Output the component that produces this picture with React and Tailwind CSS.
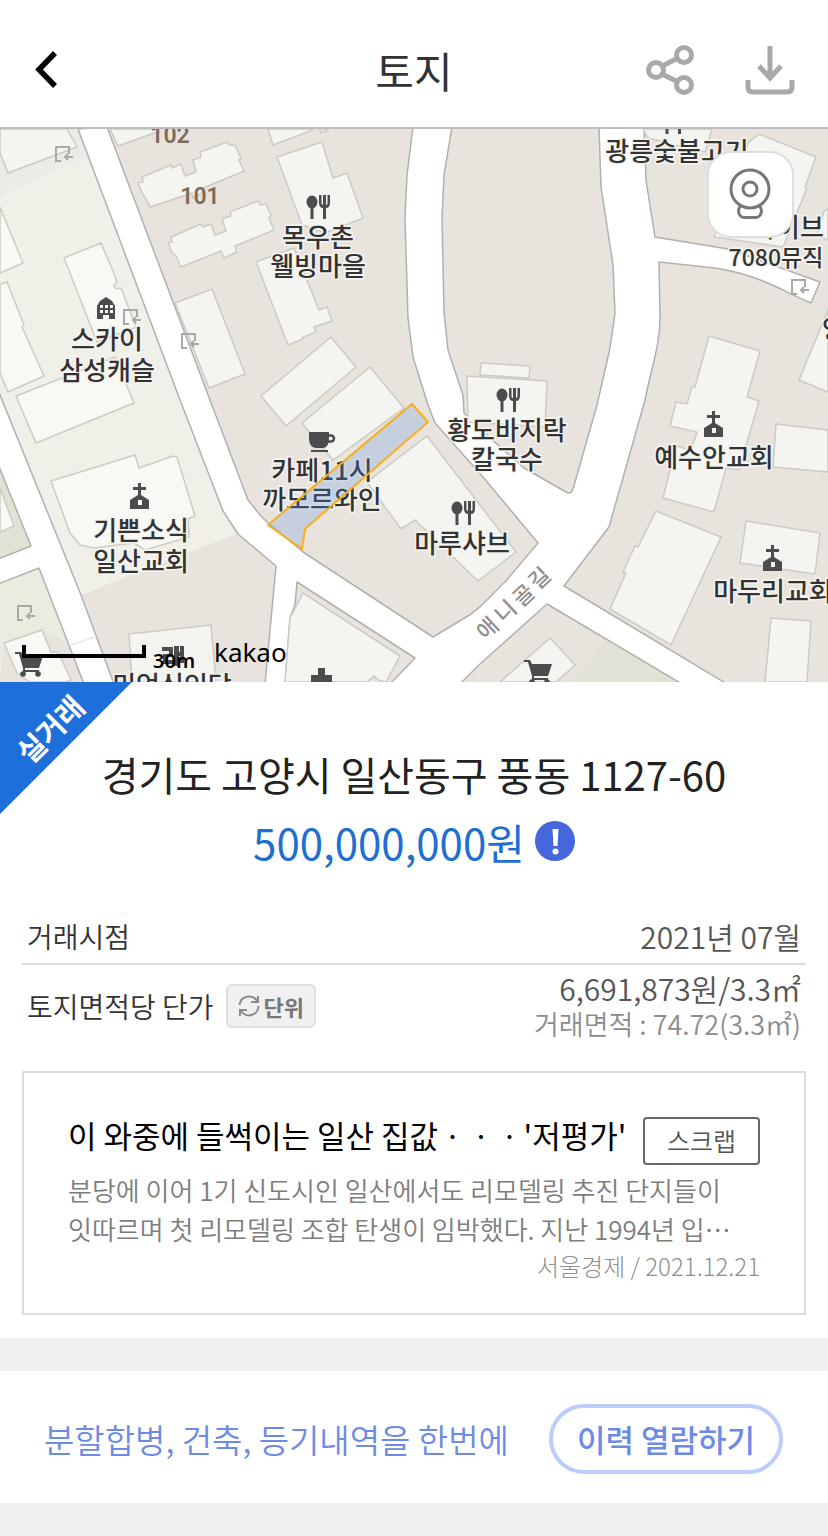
import { useState } from 'react'

const buildings = [
  '67,129 77,147 8,173 0,153 0,129',
  '110,129 118,146 160,131 160,129',
  '268,129 273,145 313,130 313,129',
  '320,129 321,133 329,130',
  '138,183 143,182 142,177 171,165 172,168 181,164 185,176 196,172 193,160 201,157 200,152 227,142 229,145 235,145 241,158 239,160 244,171 203,188 202,193 193,198 192,193 150,207 145,197 143,195',
  '168,243 172,242 171,237 201,224 203,227 211,224 215,235 226,231 222,219 231,216 230,212 258,201 260,205 266,204 271,215 269,218 274,230 235,246 237,252 224,258 221,251 181,267 176,256 172,253',
  '175,303 212,289 245,374 209,388',
  '277,157 322,142 333,178 347,173 363,218 325,233 302,225',
  '256,262 294,248 319,310 327,307 332,321 314,327 316,332 303,337 303,339 288,345',
  '331,337 356,367 286,426 261,396',
  '370,367 404,408 333,460 302,423',
  '481,363 530,366 529,378 480,375',
  '467,376 547,381 545,427 468,422',
  '427,436 516,552 478,581 415,520 401,529 367,482',
  '643,129 648,138 705,152 712,129',
  '759,134 816,157 805,187 807,188 783,247 714,237 748,143',
  '828,209 824,211 817,235 828,240',
  '828,310 799,380 828,392',
  '709,336 760,351 747,397 759,401 739,470 726,468 714,512 663,498 676,446 691,450 697,432 670,426 676,402 687,404 692,387 695,387',
  '776,424 828,430 828,472 773,467',
  '656,511 721,537 671,645 610,609 626,573 623,572 635,546 638,547',
  '746,521 820,533 815,574 740,563',
  '771,618 811,621 807,682 765,682',
  '550,638 575,665 556,682 500,682',
  '129,634 211,625 216,682 132,682',
  '303,593 400,656 386,682 378,680 374,676 367,682 285,682 290,618',
]

const lightBuildings = [
  '64,258 101,243 113,271 117,282 114,285 116,289 121,288 136,327 97,342',
  '0,207 23,263 0,273',
  '0,284 7,282 24,325 22,327 44,376 8,392 0,373',
  '16,396 115,357 134,403 36,443',
  '51,481 135,455 139,468 173,456 177,457 195,516 188,519 189,537 145,550 134,543 93,548 80,545 70,533',
  '0,488 14,526 0,532',
  '4,643 42,630 51,652 58,652 71,680 66,682 30,682 17,673',
]

const entrances = [[56, 147], [124, 310], [182, 334], [792, 280], [18, 606]]

const places = [
  { icon: 'house', ix: 97, iy: 297, x: 107, lines: [['스카이', 349], ['삼성캐슬', 380]] },
  { icon: 'food', ix: 306, iy: 195, x: 318, lines: [['목우촌', 247], ['웰빙마을', 276]] },
  { icon: 'food', ix: 661, iy: 110, x: 677, lines: [['광릉숯불고기', 161]] },
  { icon: 'food', ix: 496, iy: 388, x: 507, lines: [['황도바지락', 440], ['칼국수', 469]] },
  { icon: 'cup', ix: 309, iy: 432, x: 322, lines: [['카페11시', 480], ['까모르와인', 509]] },
  { icon: 'food', ix: 451, iy: 501, x: 462, lines: [['마루샤브', 553]] },
  { icon: 'church', ix: 704, iy: 411, x: 714, lines: [['예수안교회', 467]] },
  { icon: 'church', ix: 763, iy: 545, x: 773, lines: [['마두리교회', 601]] },
  { icon: 'church', ix: 130, iy: 483, x: 141, lines: [['기쁜소식', 540], ['일산교회', 571]] },
  { icon: 'shop', ix: 162, iy: 646, x: 172, lines: [['미엄식인당', 695]] },
  { icon: 'cart', ix: 15, iy: 652, x: 0, lines: [] },
  { icon: 'cart', ix: 524, iy: 660, x: 0, lines: [] },
  { icon: 'cross', ix: 311, iy: 668, x: 0, lines: [] },
  { x: 788, lines: [['라이브', 237]] },
  { x: 834, lines: [['양', 339]] },
]

const markers = {
  food: (
    <>
      <ellipse cx="6" cy="7" rx="5.5" ry="6.5" />
      <path d="M4.5 12h3v12h-3zM13 0h2.500v8c0 1 .5 2 1.500 2V0h3v10c1 0 1.500-1 1.500-2V0H24v8c0 3-1.500 5-4 5v11h-3V13c-2.500 0-4-2-4-5z" />
    </>
  ),
  church: <path fillRule="evenodd" d="M8 0h3v4h5v3h-5v5l8 5v9H0v-9l8-5V7H3V4h5zM8 17v5h4v-5z" />,
  house: <path fillRule="evenodd" d="M9 0 15 4 18 9v13h-6v-4H6v4H0V9l3-5zM3 8v3h3V8zm5 0v3h3V8zm5 0v3h3V8zM3 13v3h3v-3zm5 0v3h3v-3zm5 0v3h3v-3z" />,
  cup: (
    <>
      <path d="M0 0h20v7c0 6-3 9-6 9H7c-4 0-7-4-7-9zM2 18h17v2H2z" />
      <path d="M19 3.500h3a3 3 0 0 1 0 6h-3" fill="none" stroke="#4c4c4c" strokeWidth="2.500" />
    </>
  ),
  cart: (
    <>
      <path d="M0 0h6l2 4h20l-4 12H10v2h14v2H8v-4L4 2H0z" />
      <circle cx="8" cy="22" r="2.8" />
      <circle cx="23" cy="22" r="2.8" />
    </>
  ),
  cross: <path d="M7 0h7v7h7v7h-7v7H7v-7H0V7h7z" />,
  shop: <path d="M0 1h11v10H5v3h6v4H1V8h6V5H0zM12 0h5v6h4v4h-4v10h-5zM18 0h4v17h-4z" />,
}

function LandMap() {
  return (
    <svg
      className="block h-[553px] w-full font-[Noto_Sans_CJK_KR,sans-serif]"
      viewBox="0 129 828 553"
      preserveAspectRatio="xMidYMid slice"
      role="img"
      aria-label="지도"
    >
      <rect y="129" width="828" height="553" fill="#e8e4dd" />
      <path d="M0 129H78L180 400 223 511 238 533 81 595 0 400z" fill="#f0f0e8" />
      <path d="M0 129H78L88 156 0 196z" fill="#ebece8" />
      <path d="M0 468 31 546 0 558zM606 641 572 682H680z" fill="#e1e1d5" />
      <path d="M0 583 39 568 67 642 40 630 4 643 0 682z" fill="#ebebdf" />

      {/* roads */}
      <g fill="#fff" stroke="#b0b0ae" strokeWidth="1.5" strokeLinejoin="round">
        <path d="M78 129 180 400 223 511 238 534 276 566 265 684H285L290 618 295 605 297 582 415 658 390 684H460L480 664 547 604 682 684H727L564 586 609 527 645 400C652 365 660 345 660 318L659 262 715 268C760 275 780 290 811 303L820 282 728 249 655 237 646 180 644 127H599L601 187 613 265 615 313 610 348 597 405 573 489Q571 495 566 492L524 468 490 438 464 413 463 395 448 350 444 312 442 218 444 175 452 127H413L407 175 405 218 408 318 413 357 428 405 435 423 483 477 538 543 505 582C490 596 480 610 463 619L433 637 303 552 267 522 260 515 248 500 210 400 107 127z" />
        <path d="M-2 390 81 595 114 684H84L39 568 -2 584V559L31 546 -2 464z" />
      </g>
      <path d="M68 646 95 637" stroke="#dedede" />

      <g fill="#f4f5f1" stroke="#cbcac4" strokeWidth="1.5">
        {buildings.map(points => <polygon key={points} points={points} />)}
      </g>
      <g fill="#f8f8f5" stroke="#cdccc2" strokeWidth="1.5">
        {lightBuildings.map(points => <polygon key={points} points={points} />)}
      </g>

      <g fill="none" stroke="#a9a9a7" strokeWidth="2">
        {entrances.map(([x, y]) => (
          <path key={x} transform={`translate(${x} ${y})`} d="M13 7V0H0v14h5M17 10H9m3-3-3 3 3 3" />
        ))}
      </g>

      <g fontSize="23" fontWeight="600" fill="#7d6b5b" textAnchor="middle" className="font-[Roboto,sans-serif]">
        <text x="170" y="143">102</text>
        <text x="200" y="204">101</text>
      </g>

      <g fill="#4c4c4c">
        {places.filter(p => p.icon).map(p => (
          <g key={`${p.ix}-${p.iy}`} transform={`translate(${p.ix} ${p.iy})`}>{markers[p.icon]}</g>
        ))}
      </g>

      <g fontSize="26" fontWeight="500" fill="#333" stroke="#f6f5f1" strokeWidth="3" paintOrder="stroke" textAnchor="middle">
        {places.map(p => p.lines.map(([text, y]) => (
          <text key={text} x={p.x} y={y}>{text}</text>
        )))}
        <text x="776" y="266" fontSize="23">7080뮤직</text>
      </g>

      <g fontSize="22" fontWeight="500" fill="#8f8f8f" textAnchor="middle">
        <text transform="translate(493 634) rotate(-43)">애</text>
        <text transform="translate(511 617) rotate(-43)">니</text>
        <text transform="translate(529 601) rotate(-43)">골</text>
        <text transform="translate(545 584) rotate(-43)">길</text>
      </g>

      <path d="M412 404 428 422 305 529 302 549 268 525z" fill="#5b8fe0" fillOpacity=".25" stroke="#f9ae1c" strokeWidth="2" />

      <path d="M24 645V656H144V645" fill="none" stroke="#000" strokeWidth="4" />
      <g fill="#000" className="font-[Noto_Sans,sans-serif]">
        <text x="153" y="668" fontSize="20" fontWeight="600">30m</text>
        <text x="214" y="662" fontSize="26">kakao</text>
      </g>
    </svg>
  )
}

function Header() {
  return (
    <header className="grid h-[129px] grid-cols-[1fr_auto_1fr] items-center border-b-2 border-[#bcbcbc] px-8 pt-3">
      <button type="button" aria-label="뒤로" className="justify-self-start">
        <svg width="28" height="40" viewBox="0 0 28 40" fill="none" stroke="#000" strokeWidth="5.5">
          <path d="M23 3 7 19.500 23 36" />
        </svg>
      </button>
      <h1 className="text-[42px] leading-14 text-[#333]">토지</h1>
      <div className="flex items-center gap-12 justify-self-end">
        <button type="button" aria-label="공유">
          <svg width="52" height="52" viewBox="0 0 52 52" fill="none" stroke="#a9a9a9" strokeWidth="5">
            <circle cx="40" cy="11" r="7.5" />
            <circle cx="12" cy="26" r="7.5" />
            <circle cx="40" cy="41" r="7.5" />
            <path d="M18 22 34 14M18 30 34 38" />
          </svg>
        </button>
        <button type="button" aria-label="다운로드">
          <svg width="52" height="52" viewBox="0 0 52 52" fill="none" stroke="#a9a9a9" strokeWidth="5">
            <path d="M26 2V34M15 22 26 34 37 22M4 36V43Q4 48 9 48H43Q48 48 48 43V36" />
          </svg>
        </button>
      </div>
    </header>
  )
}

function UnitButton({ onClick }) {
  return (
    <button
      type="button"
      onClick={onClick}
      className="flex h-11 items-center gap-1 rounded-md border-2 border-[#dfdfdf] bg-[#f0f0f0] px-[10px] text-[22px] font-bold text-[#777]"
    >
      <svg width="22" height="22" viewBox="0 0 22 22" fill="none" stroke="#8a8a8a" strokeWidth="2">
        <path d="M1.500 10A9.500 9.500 0 0 1 19 6M20 1V7H13M20.500 11A9.500 9.500 0 0 1 3 16M2 21V15H9" />
      </svg>
      단위
    </button>
  )
}

export default function App() {
  const [perPyeong, setPerPyeong] = useState(true)
  const unit = perPyeong ? '3.3㎡' : '㎡'

  return (
    <div className="min-h-screen bg-[#f0f0f0] font-[Noto_Sans_CJK_KR,sans-serif]">
      <div className="bg-white">
        <Header />

        <div className="relative">
          <LandMap />
          <button
            type="button"
            aria-label="로드뷰"
            className="absolute top-[22px] right-[34px] flex size-[87px] items-center justify-center rounded-[24px] border-2 border-[#dedede] bg-white"
          >
            <svg width="44" height="54" viewBox="0 0 44 54" fill="none" stroke="#777" strokeWidth="3">
              <circle cx="21" cy="21" r="19" />
              <circle cx="21" cy="21" r="7" />
              <path d="M11 38.500C8 43 10 49.500 16 49.500H26C32 49.500 34 43 31 38.500" />
            </svg>
          </button>
        </div>

        <section className="relative px-[22px] pt-16 pb-[23px]">
          <div className="absolute top-0 left-0 size-[132px] bg-[#1f6fdb] [clip-path:polygon(0_0,100%_0,0_100%)]">
            <span className="absolute top-[26px] left-[9px] -rotate-45 text-[29px] leading-10 font-bold whitespace-nowrap text-white">실거래</span>
          </div>

          <h2 className="text-center text-[40px] leading-14 text-[#222]">경기도 고양시 일산동구 풍동 1127-60</h2>
          <div className="flex h-[78px] items-center justify-center gap-[10px] text-[42px] text-[#1f6fd2]">
            <span>500,000,000원</span>
            <button type="button" aria-label="안내">
              <svg width="40" height="40" viewBox="0 0 40 40">
                <circle cx="20" cy="20" r="20" fill="#4666dc" />
                <path d="M17.500 8h6l-1 17h-4z" fill="#fff" />
                <circle cx="20.500" cy="30.500" r="3" fill="#fff" />
              </svg>
            </button>
          </div>

          <dl className="mt-[29px] text-[#555]">
            <div className="flex h-14 items-center justify-between border-b-2 border-[#dcdcdc] px-[5px]">
              <dt className="text-[28px] leading-9 font-[350] text-[#333]">거래시점</dt>
              <dd className="text-[30px] leading-9 font-[350]">2021년 07월</dd>
            </div>
            <div className="flex items-center justify-between px-[5px] pt-[5px]">
              <dt className="flex items-center gap-3 text-[28px] leading-9 font-[350] text-[#333]">
                토지면적당 단가
                <UnitButton onClick={() => setPerPyeong(!perPyeong)} />
              </dt>
              <dd className="text-right font-[350]">
                <div className="text-[30px] leading-9">6,691,873원/{unit}</div>
                <div className="text-[27px] leading-9 text-[#8c8c8c]">거래면적 : 74.72({unit})</div>
              </dd>
            </div>
          </dl>

          <article className="mt-[29px] border-2 border-[#dcdcdc] px-11 pt-11 pb-[29px]">
            <div className="flex items-start justify-between">
              <h3 className="text-[31px] leading-9 whitespace-nowrap text-black">이 와중에 들썩이는 일산 집값ㆍㆍㆍ'저평가'</h3>
              <button type="button" className="h-12 shrink-0 rounded border-2 border-[#666] px-[22px] text-[25px] font-[350] text-[#555]">
                스크랩
              </button>
            </div>
            <p className="mt-[5px] text-[26px] leading-[39px] font-[350] whitespace-nowrap text-[#7d7d7d]">
              분당에 이어 1기 신도시인 일산에서도 리모델링 추진 단지들이<br />
              잇따르며 첫 리모델링 조합 탄생이 임박했다. 지난 1994년 입⋯
            </p>
            <p className="text-right text-[24px] leading-9 font-light text-[#8f8f8f]">서울경제 / 2021.12.21</p>
          </article>
        </section>
      </div>

      <section className="mt-[33px] flex h-[132px] items-center justify-between bg-white pt-1 pr-[45px] pl-11 text-[#6c8ae6]">
        <p className="text-[33px] leading-11 font-[350]">분할합병, 건축, 등기내역을 한번에</p>
        <button type="button" className="h-[70px] rounded-full border-4 border-[#bccdfc] px-6 text-[31px] font-medium">
          이력 열람하기
        </button>
      </section>
    </div>
  )
}
